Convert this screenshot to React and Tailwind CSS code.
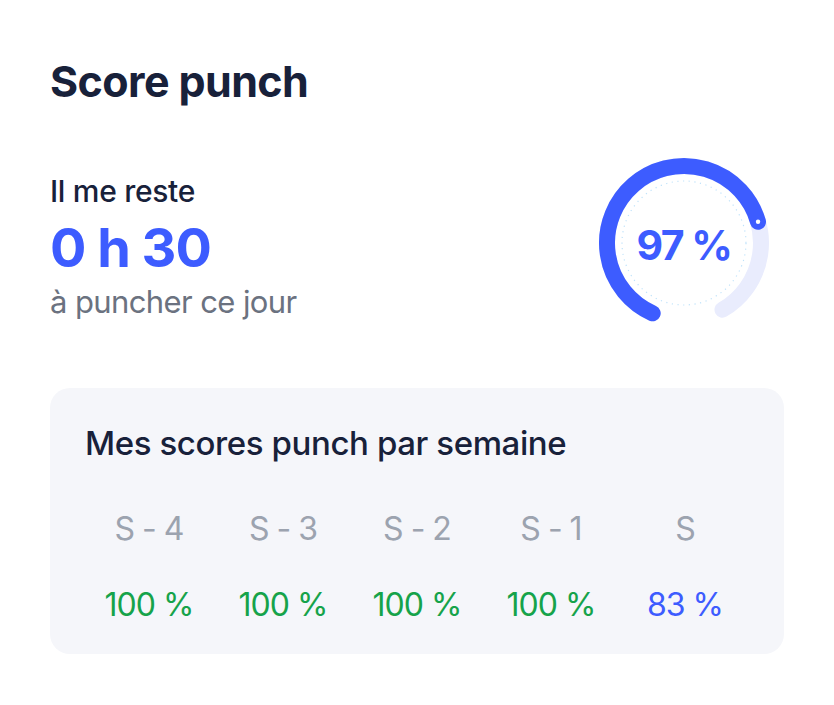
import React from "react";

function Ring() {
  const cx = 86, cy = 86, r = 77;
  const polar = (deg) => {
    const a = (deg - 90) * Math.PI / 180;
    return [cx + r * Math.cos(a), cy + r * Math.sin(a)];
  };
  const arc = (from, to) => {
    const [x1, y1] = polar(from);
    const [x2, y2] = polar(to);
    const large = to - from > 180 ? 1 : 0;
    return `M ${x1} ${y1} A ${r} ${r} 0 ${large} 1 ${x2} ${y2}`;
  };
  const start = 204, end = 150 + 360, prog = 434;
  const [dx, dy] = polar(prog);
  return (
    <div className="relative w-[172px] h-[172px]">
      <svg width="172" height="172" viewBox="0 0 172 172">
        <circle cx={cx} cy={cy} r="62" fill="none" stroke="#bfe2fa" strokeWidth="1.2" strokeDasharray="1.2 4.5" />
        <path d={arc(start, end)} fill="none" stroke="#e9ecfd" strokeWidth="16" strokeLinecap="round" />
        <path d={arc(start, prog)} fill="none" stroke="#3d5cff" strokeWidth="16" strokeLinecap="round" />
        <circle cx={dx} cy={dy} r="2.2" fill="#fff" />
      </svg>
      <div className="absolute inset-0 flex items-center justify-center pt-[6px]">
        <span className="text-[41px] font-bold text-[#3d5cff] tracking-[-1.5px]">97 %</span>
      </div>
    </div>
  );
}

export default function App() {
  const weeks = [
    ["S - 4", "100 %", "text-[#16a34a]"],
    ["S - 3", "100 %", "text-[#16a34a]"],
    ["S - 2", "100 %", "text-[#16a34a]"],
    ["S - 1", "100 %", "text-[#16a34a]"],
    ["S", "83 %", "text-[#3d5cff]"],
  ];
  return (
    <div className="w-[834px] h-[705px] bg-white" style={{ fontFamily: "Inter, 'Noto Sans', sans-serif" }}>
      <div className="px-[50px] pt-[56px]">
        <h1 className="text-[43px] font-bold text-[#18213a] leading-[50px] tracking-[-0.6px]">Score punch</h1>
        <div className="flex items-start justify-between mt-[51px] pr-[14px]">
          <div className="flex flex-col pt-[16px]">
            <div className="text-[30px] font-medium text-[#18213a] leading-[36px] tracking-[-0.3px]">Il me reste</div>
            <div className="text-[54px] font-bold text-[#3d5cff] leading-[60px] tracking-[-1px] mt-[9px]">0 h 30</div>
            <div className="text-[31px] text-[#6b7280] leading-[40px] tracking-[-0.6px] mt-[4px]">à puncher ce jour</div>
          </div>
          <Ring />
        </div>
        <div className="mt-[59px] w-[734px] h-[266px] bg-[#f5f6fa] rounded-[20px] px-[32px] pt-[35px]">
          <div className="pl-[3px] text-[33px] font-medium text-[#18213a] leading-[40px] tracking-[-0.4px]">Mes scores punch par semaine</div>
          <div className="grid grid-cols-5 mt-[46px]">
            {weeks.map(([l]) => (
              <div key={l} className="text-center text-[32px] text-[#9ca3af] leading-[40px] tracking-[-1px]">{l}</div>
            ))}
          </div>
          <div className="grid grid-cols-5 mt-[36px]">
            {weeks.map(([l, v, c]) => (
              <div key={l} className={`text-center text-[32px] leading-[40px] tracking-[-1px] ${c}`}>{v}</div>
            ))}
          </div>
        </div>
      </div>
    </div>
  );
}
